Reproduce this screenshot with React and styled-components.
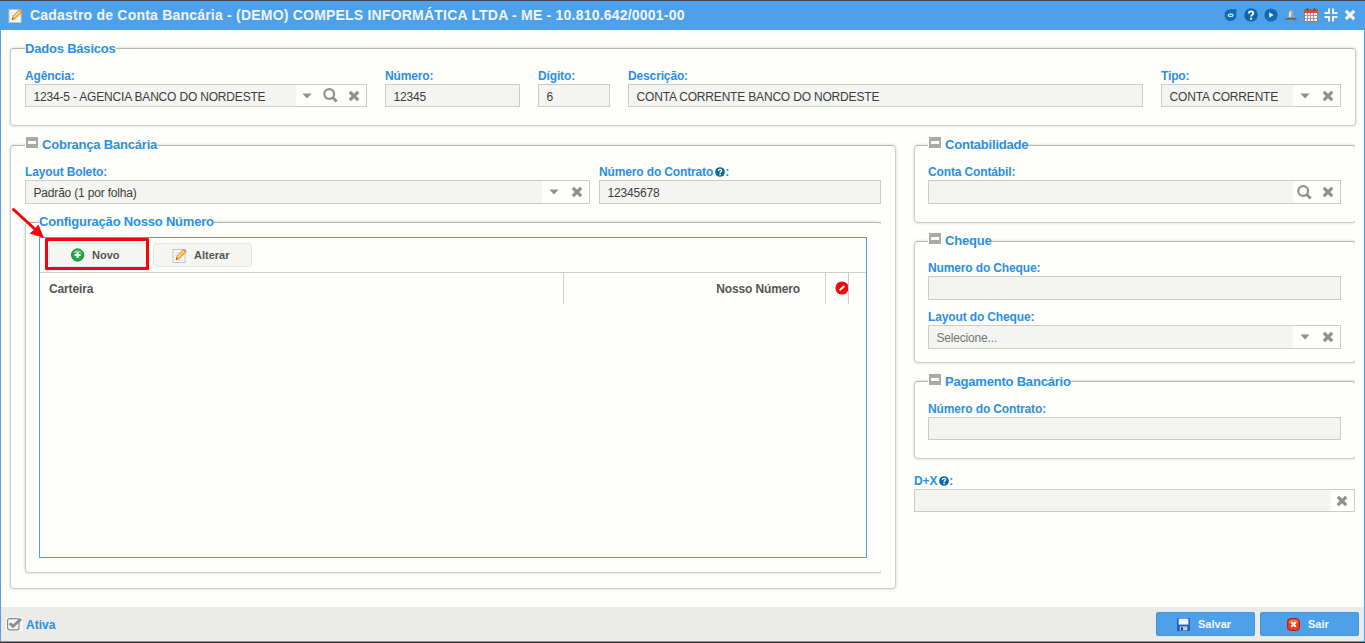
import React from 'react';
import styled, { createGlobalStyle } from 'styled-components';

/** ********************************************* */
// Icons
/** ********************************************* */
const CloseIcon = ({ size = 12 }) => (
  <svg width={size} height={size} viewBox="0 0 12 12">
    <path d="M1.8 1.8 L10.2 10.2 M10.2 1.8 L1.8 10.2" stroke="currentColor" strokeWidth="3.2" />
  </svg>
);

const CaretIcon = () => (
  <svg width="10" height="6" viewBox="0 0 10 6">
    <path d="M0.4 0.6 H9.6 L5 5.4 Z" fill="currentColor" />
  </svg>
);

const SearchIcon = () => (
  <svg width="15" height="15" viewBox="0 0 15 15" fill="none" stroke="currentColor">
    <circle cx="6.2" cy="6" r="4.9" strokeWidth="2.2" />
    <path d="M9.6 9.4 L13.7 13.5" strokeWidth="2.8" />
  </svg>
);

const PencilIcon = ({ size = 15 }) => (
  <svg width={size} height={size} viewBox="0 0 15 15">
    <rect x="1" y="1.5" width="12" height="13" fill="#fbfbfb" stroke="#c4c2bc" />
    <path d="M3 5h5M3 7.5h3M3 12h8" stroke="#d6dce2" />
    <path d="M4 11.5 L5 8.3 L11 1.8 L13.8 4.2 L7.4 10.8 Z" fill="#f3bd4c" stroke="#c98d2b" strokeWidth="0.7" />
    <path d="M6 9 L12 3" stroke="#ffe7a0" />
    <path d="M10.8 2 L12.2 0.8 L14.8 3.2 L13.6 4.4 Z" fill="#e58b78" />
    <path d="M4 11.5 L4.5 9.8 L5.7 11 Z" fill="#4b4033" />
  </svg>
);

const HelpIcon = ({ size = 10 }) => (
  <svg width={size} height={size} viewBox="0 0 14 14">
    <circle cx="7" cy="7" r="6.8" fill="#0a67ae" />
    <path d="M4.8 5.5 C4.8 2.6 9.3 2.6 9.3 5.2 C9.3 6.8 7.1 6.7 7.1 8.6" fill="none" stroke="#fff" strokeWidth="1.8" />
    <rect x="6.1" y="9.7" width="2" height="1.9" fill="#fff" />
  </svg>
);

const ChatIcon = () => (
  <svg width="14" height="14" viewBox="0 0 14 14">
    <path d="M0.6 7.2 C0.6 3.6 3 1.2 6.6 1.2 L12.4 1 L12.4 7 C12.4 10.8 10 13 6.6 13 C3 13 0.6 10.6 0.6 7.2 Z" fill="#0f6cb4" />
    <rect x="3.8" y="5.4" width="5.8" height="3.6" rx="1.6" fill="#c3e0f6" />
    <path d="M5.2 7.4h3" stroke="#0f6cb4" />
  </svg>
);

const PlayIcon = () => (
  <svg width="14" height="14" viewBox="0 0 14 14">
    <circle cx="7" cy="7" r="6.6" fill="#0f6cb4" />
    <path d="M5.2 4.2 L9.6 7 L5.2 9.8 Z" fill="#e9f4fc" />
  </svg>
);

const BellIcon = () => (
  <svg width="14" height="13" viewBox="-1 0 14 13">
    <path d="M6 0.2 C7 0.2 7.2 1 7.6 1.8 C9 3 8.8 6.8 10.4 8.8 H1.6 C3.2 6.8 3 3 4.4 1.8 C4.8 1 5 0.2 6 0.2 Z" fill="#93a3b0" />
    <path d="M5.6 2.4 L4.8 8.2" stroke="#dfe6ec" strokeWidth="2" />
    <rect x="0.5" y="8.8" width="11" height="2" fill="#5c6a76" />
    <rect x="4.6" y="10.8" width="2.8" height="1.6" fill="#8a98a3" />
  </svg>
);

const CalendarIcon = () => (
  <svg width="14" height="14" viewBox="0 0 14 14">
    <rect x="0.5" y="1.5" width="13" height="12" fill="#f4f1ee" stroke="#8d8482" />
    <rect x="0" y="1" width="14" height="4" fill="#dd4a3c" />
    <path d="M3.5 0v3M10.5 0v3" stroke="#6d4a48" strokeWidth="1.4" />
    <path d="M1 7.5h12M1 10.5h12M3.5 5v8M6.5 5v8M9.5 5v8" stroke="#a09a98" />
  </svg>
);

const CompressIcon = () => (
  <svg width="14" height="14" viewBox="0 0 14 14" fill="none" stroke="#f0f4f6" strokeWidth="2">
    <path d="M5 0.5 V5 H0.5 M9 0.5 V5 H13.5 M5 13.5 V9 H0.5 M9 13.5 V9 H13.5" />
  </svg>
);

const AddIcon = () => (
  <svg width="14" height="14" viewBox="0 0 14 14">
    <circle cx="6.6" cy="7" r="6.2" fill="#1fa844" stroke="#16803a" strokeWidth="0.8" />
    <path d="M2 5 A5 5 0 0 1 11.2 5 Z" fill="#74cf86" />
    <path d="M6.6 4v6M3.6 7h6" stroke="#fff" strokeWidth="2.2" />
  </svg>
);

const BlockIcon = () => (
  <svg width="14" height="14" viewBox="0 0 14 14">
    <circle cx="7" cy="7" r="6.6" fill="#f20808" />
    <path d="M4.6 9.2 L9.4 5" stroke="#fff" strokeWidth="2" />
  </svg>
);

const SaveIcon = () => (
  <svg width="13" height="13" viewBox="0 0 13 13">
    <rect width="13" height="13" rx="1" fill="#1c5fc4" />
    <rect x="1.6" y="0.6" width="9.8" height="6" fill="#eef3f8" />
    <rect x="2.8" y="8.4" width="7.6" height="4" fill="#c3cad3" />
    <rect x="4" y="9.3" width="2" height="3" fill="#163f86" />
  </svg>
);

const ExitIcon = () => (
  <svg width="13" height="13" viewBox="0 0 13 13">
    <rect x="0.5" y="0.5" width="12" height="12" rx="3.4" fill="#ee3b1d" stroke="#b81d0c" />
    <path d="M2 5 Q2 2 5 1.8 H8 Q11 2 11 5 Z" fill="#f87553" />
    <path d="M4.2 4.2 L8.8 8.8 M8.8 4.2 L4.2 8.8" stroke="#fff" strokeWidth="2" />
  </svg>
);

const CheckIcon = () => (
  <svg width="16" height="14" viewBox="0 0 16 14" fill="none">
    <rect x="1.6" y="1.6" width="11.4" height="11.2" rx="2" stroke="#8b8b89" strokeWidth="1.2" />
    <path d="M3.8 6.2 L7 9.4 L15 2" stroke="#8b8b89" strokeWidth="2.8" />
  </svg>
);

/** ********************************************* */
// Form pieces
/** ********************************************* */
function Field({ label, help, value, placeholder, icons = [], width, height = 24 }) {
  return (
    <FieldBox $width={width}>
      <Label>
        <span>{label}</span>
        {help && <HelpIcon />}
        :
      </Label>
      <Input $height={height}>
        <Value $muted={!value}>{value || placeholder}</Value>
        {icons.length > 0 && (
          <Triggers>
            {icons.map((icon) => (
              <Trigger key={icon}>
                {icon === 'caret' && <CaretIcon />}
                {icon === 'search' && <SearchIcon />}
                {icon === 'close' && <CloseIcon />}
              </Trigger>
            ))}
          </Triggers>
        )}
      </Input>
    </FieldBox>
  );
}

function Group({ title, collapsible, clipped, low, height, gap = 11, children }) {
  return (
    <Fieldset $height={height} $clipped={clipped}>
      <Legend $collapsible={collapsible} $low={low}>
        {collapsible && <Collapse />}
        {title}
      </Legend>
      <GroupBody $gap={gap}>{children}</GroupBody>
    </Fieldset>
  );
}

export default function App() {
  return (
    <Window>
      <GlobalStyle />
      <TitleBar>
        <PencilIcon />
        <Title>Cadastro de Conta Bancária - (DEMO) COMPELS INFORMÁTICA LTDA - ME - 10.810.642/0001-00</Title>
        <Tools>
          <ChatIcon />
          <HelpIcon size={14} />
          <PlayIcon />
          <BellIcon />
          <CalendarIcon />
          <CompressIcon />
          <CloseIcon />
        </Tools>
      </TitleBar>

      <Content>
        <Group title="Dados Básicos" low height={78}>
          <Row $gap={18}>
            <Field label="Agência" value="1234-5 - AGENCIA BANCO DO NORDESTE" icons={['caret', 'search', 'close']} width={342} height={23} />
            <Field label="Número" value="12345" width={135} height={23} />
            <Field label="Dígito" value="6" width={72} height={23} />
            <Field label="Descrição" value="CONTA CORRENTE BANCO DO NORDESTE" width={515} height={23} />
            <Field label="Tipo" value="CONTA CORRENTE" icons={['caret', 'close']} width={180} height={23} />
          </Row>
        </Group>

        <Columns>
          <LeftColumn>
            <Group title="Cobrança Bancária" collapsible height={444}>
              <Row $gap={9}>
                <Field label="Layout Boleto" value="Padrão (1 por folha)" icons={['caret', 'close']} width={565} />
                <Field label="Número do Contrato" help value="12345678" width={282} />
              </Row>
              <NestedGroup>
                <Group title="Configuração Nosso Número" clipped height={351} gap={7}>
                  <Grid>
                    <Toolbar>
                      <ToolButton $pad={21}>
                        <AddIcon />
                        Novo
                      </ToolButton>
                      <ToolButton $pad={18}>
                        <PencilIcon />
                        Alterar
                      </ToolButton>
                      <Highlight />
                      <Arrow width="36" height="34" viewBox="0 0 36 34">
                        <path d="M2.5 2.5 L26 24" stroke="#fb0007" strokeWidth="3" strokeLinecap="round" />
                        <path d="M33 31 L18.6 26.6 L23.4 22.6 L27.4 17.4 Z" fill="#fb0007" />
                      </Arrow>
                    </Toolbar>
                    <HeaderRow>
                      <HeaderCell $width={524}>Carteira</HeaderCell>
                      <HeaderCell $width={262} $right>Nosso Número</HeaderCell>
                      <HeaderCell $width={23} $icon><BlockIcon /></HeaderCell>
                    </HeaderRow>
                  </Grid>
                </Group>
              </NestedGroup>
            </Group>
          </LeftColumn>

          <RightColumn>
            <Group title="Contabilidade" collapsible clipped height={78}>
              <Field label="Conta Contábil" icons={['search', 'close']} width={413} />
            </Group>
            <Group title="Cheque" collapsible clipped height={122}>
              <Stack>
                <Field label="Numero do Cheque" width={413} />
                <Field label="Layout do Cheque" placeholder="Selecione..." icons={['caret', 'close']} width={413} />
              </Stack>
            </Group>
            <Group title="Pagamento Bancário" collapsible clipped low height={78}>
              <Field label="Número do Contrato" width={413} height={23} />
            </Group>
            <LooseField>
              <Field label="D+X" help icons={['close']} width={441} height={23} />
            </LooseField>
          </RightColumn>
        </Columns>
      </Content>

      <Footer>
        <CheckLabel>
          <CheckBack><CheckIcon /></CheckBack>
          <CheckText>Ativa</CheckText>
        </CheckLabel>
        <ActionButton $pad={20}>
          <SaveIcon />
          Salvar
        </ActionButton>
        <ActionButton $pad={26}>
          <ExitIcon />
          Sair
        </ActionButton>
      </Footer>
    </Window>
  );
}

// Styling
const GlobalStyle = createGlobalStyle`
  * {
    box-sizing: border-box;
  }
  body {
    margin: 0;
    overflow: hidden;
    font-family: "Liberation Sans", Arial, sans-serif;
    font-size: 12px;
  }
  svg {
    display: block;
    flex: none;
  }
`;

const Window = styled.div`
  display: flex;
  flex-direction: column;
  width: 1365px;
  height: 643px;
  background-color: #fefefb;
  border-top: 1px solid #45474c;
  border-bottom: 1px solid #2b2e33;
`;

const TitleBar = styled.div`
  display: flex;
  align-items: center;
  height: 29px;
  padding: 0 9px 1px 8px;
  color: #f2f4f3;
  background-color: #4ea1e8;
`;

const Title = styled.div`
  flex: 1;
  margin-left: 7px;
  font-size: 14px;
  font-weight: bold;
  letter-spacing: 0.21px;
  white-space: nowrap;
`;

const Tools = styled.div`
  display: flex;
  align-items: center;
  gap: 6px;
`;

const Content = styled.div`
  flex: 1;
  padding: 18px 8px 0 9px;
  border: solid #4ea1e8;
  border-width: 0 1px;
`;

const Columns = styled.div`
  display: flex;
  gap: 18px;
  margin-top: 19px;
`;

const LeftColumn = styled.div`
  width: 886px;
`;

const RightColumn = styled.div`
  display: flex;
  flex-direction: column;
  gap: 18px;
  width: 442px;
`;

const Fieldset = styled.div`
  height: ${(props) => props.$height}px;
  padding: 0 ${(props) => (props.$clipped ? 13 : 14)}px;
  border: 1px solid #cdcdca;
  border-top-color: #b5b5b2;
  border-radius: 4px;
  box-shadow: 0 0 3px rgba(0, 0, 0, 0.22);
  ${(props) => props.$clipped && 'clip-path: inset(-20px 1px -6px -20px);'}
`;

const Legend = styled.div`
  display: flex;
  align-items: center;
  width: max-content;
  height: 16px;
  margin-top: ${(props) => (props.$low ? -8 : -9)}px;
  padding-left: ${(props) => (props.$collapsible ? 1 : 0)}px;
  color: #2a8fe4;
  font-size: 13px;
  font-weight: bold;
  letter-spacing: -0.2px;
  line-height: 16px;
  background-color: #fefefb;
`;

const Collapse = styled.span`
  width: 12px;
  height: 11px;
  margin: -5px 4px 0 0;
  border: solid #a9a9a7;
  border-width: 4px 2px;
  background-color: #fefefb;
`;

const GroupBody = styled.div`
  padding-top: ${(props) => props.$gap}px;
`;

const NestedGroup = styled.div`
  width: 857px;
  margin-top: 18px;
`;

const Row = styled.div`
  display: flex;
  gap: ${(props) => props.$gap}px;
`;

const Stack = styled.div`
  display: flex;
  flex-direction: column;
  gap: 9px;
`;

const LooseField = styled.div`
  margin-top: -4px;
`;

const FieldBox = styled.div`
  width: ${(props) => props.$width}px;
`;

const Label = styled.div`
  display: flex;
  align-items: center;
  height: 16px;
  color: #2a8fe4;
  font-weight: bold;
  letter-spacing: -0.14px;
  line-height: 16px;

  svg {
    margin: -1px 0 0 2px;
  }
`;

const Input = styled.div`
  display: flex;
  height: ${(props) => props.$height}px;
  border: 1px solid #cbcbc8;
  background-color: #f4f5f2;
`;

const Value = styled.div`
  flex: 1;
  padding: 2px 0 0 7.5px;
  color: ${(props) => (props.$muted ? '#757573' : '#3c3c3a')};
  letter-spacing: -0.18px;
  line-height: 20px;
  white-space: nowrap;
`;

const Triggers = styled.div`
  display: flex;
  background-color: #fefefb;
`;

const Trigger = styled.div`
  display: flex;
  align-items: center;
  justify-content: center;
  width: 23.5px;
  color: #8f8f8d;
`;

const Grid = styled.div`
  width: 828px;
  height: 321px;
  border: 1px solid #4e9de0;
`;

const Toolbar = styled.div`
  position: relative;
  display: flex;
  gap: 5px;
  height: 35px;
  padding: 5px 0 0 9px;
  border-bottom: 1px solid #cdcdca;
`;

const ToolButton = styled.div`
  display: flex;
  align-items: center;
  gap: 7px;
  width: 99px;
  height: 24px;
  padding-left: ${(props) => props.$pad}px;
  color: #555553;
  font-size: 11px;
  font-weight: bold;
  border: 1px solid #e6e6e3;
  border-radius: 3px;
  background-color: #f5f5f2;
`;

// Red frame drawn over the "Novo" button
const Highlight = styled.div`
  position: absolute;
  top: 0;
  left: 5px;
  width: 104px;
  height: 32px;
  border: 3px solid #fb0007;
  border-radius: 1px;
`;

const Arrow = styled.svg`
  position: absolute;
  top: -31px;
  left: -29px;
`;

const HeaderRow = styled.div`
  display: flex;
  height: 31px;
`;

const HeaderCell = styled.div`
  display: flex;
  align-items: center;
  justify-content: ${(props) => (props.$right ? 'flex-end' : 'flex-start')};
  width: ${(props) => props.$width}px;
  padding: 0 ${(props) => (props.$right ? 25 : 0)}px ${(props) => (props.$icon ? 1 : 0)}px 9px;
  overflow: hidden;
  color: #555553;
  font-weight: bold;
  letter-spacing: -0.13px;
  border-right: 1px solid #cdcdca;
`;

const Footer = styled.div`
  display: flex;
  align-items: center;
  gap: 5px;
  height: 35px;
  padding: 0 5px;
  border: solid #4ea1e8;
  border-width: 0 1px 1px;
  background-color: #ebebe9;
`;

const CheckLabel = styled.div`
  display: flex;
  flex: 1;
  align-items: center;
  gap: 3px;
`;

const CheckBack = styled.span`
  width: 17px;
  background-color: #f5f5f2;
`;

const CheckText = styled.span`
  padding-top: 2px;
  color: #2a8fe4;
  font-weight: bold;
`;

const ActionButton = styled.div`
  display: flex;
  align-items: center;
  gap: 8px;
  width: 99px;
  height: 24px;
  padding-left: ${(props) => props.$pad}px;
  color: #f4f6f6;
  font-size: 11px;
  font-weight: bold;
  border: 1px solid #4496dc;
  border-radius: 2px;
  background-color: #4ea1e8;
`;
